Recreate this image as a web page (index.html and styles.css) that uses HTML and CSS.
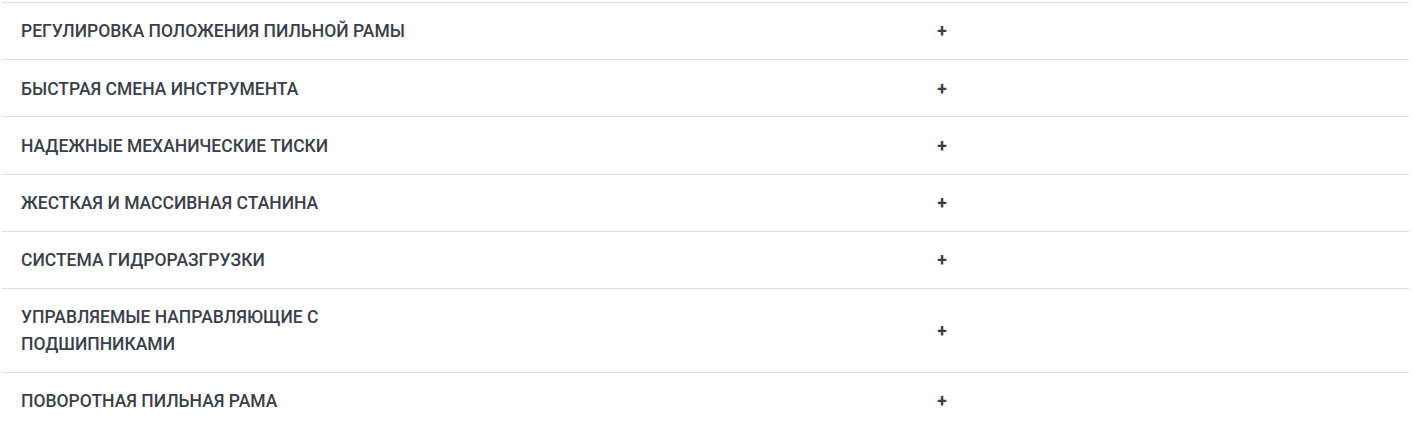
FILE: index.html
```html
<!DOCTYPE html>
<html lang="ru">
<head>
    <meta charset="UTF-8">
    <meta name="viewport" content="width=device-width, initial-scale=1.0">
    <title>Особенности</title>
    <link rel="stylesheet" href="styles.css">
</head>
<body>
    <div class="features">
        <div class="row">
            <div class="title">РЕГУЛИРОВКА ПОЛОЖЕНИЯ ПИЛЬНОЙ РАМЫ</div>
            <div class="toggle">+</div>
        </div>
        <div class="row">
            <div class="title">БЫСТРАЯ СМЕНА ИНСТРУМЕНТА</div>
            <div class="toggle">+</div>
        </div>
        <div class="row">
            <div class="title">НАДЕЖНЫЕ МЕХАНИЧЕСКИЕ ТИСКИ</div>
            <div class="toggle">+</div>
        </div>
        <div class="row">
            <div class="title">ЖЕСТКАЯ И МАССИВНАЯ СТАНИНА</div>
            <div class="toggle">+</div>
        </div>
        <div class="row">
            <div class="title">СИСТЕМА ГИДРОРАЗГРУЗКИ</div>
            <div class="toggle">+</div>
        </div>
        <div class="row">
            <div class="title">УПРАВЛЯЕМЫЕ НАПРАВЛЯЮЩИЕ С ПОДШИПНИКАМИ</div>
            <div class="toggle">+</div>
        </div>
        <div class="row">
            <div class="title">ПОВОРОТНАЯ ПИЛЬНАЯ РАМА</div>
            <div class="toggle">+</div>
        </div>
    </div>
</body>
</html>
```

FILE: styles.css
```css
body {
    margin: 0;
    font-family: Roboto, "Liberation Sans", sans-serif;
    background: #fff;
    color: #3a3f4b;
}
.features {
    margin: 2px 4px 0 2px;
}
.row {
    display: grid;
    grid-template-columns: 901px 40px 1fr;
    align-items: center;
    padding: 15.4px 0 14px 19px;
    border-top: 1px solid #dedede;
    font-size: 17.5px;
    font-weight: 500;
    line-height: 26.8px;
}
.title {
    max-width: 410px;
}
.toggle {
    text-align: center;
    font-weight: 700;
}
```
